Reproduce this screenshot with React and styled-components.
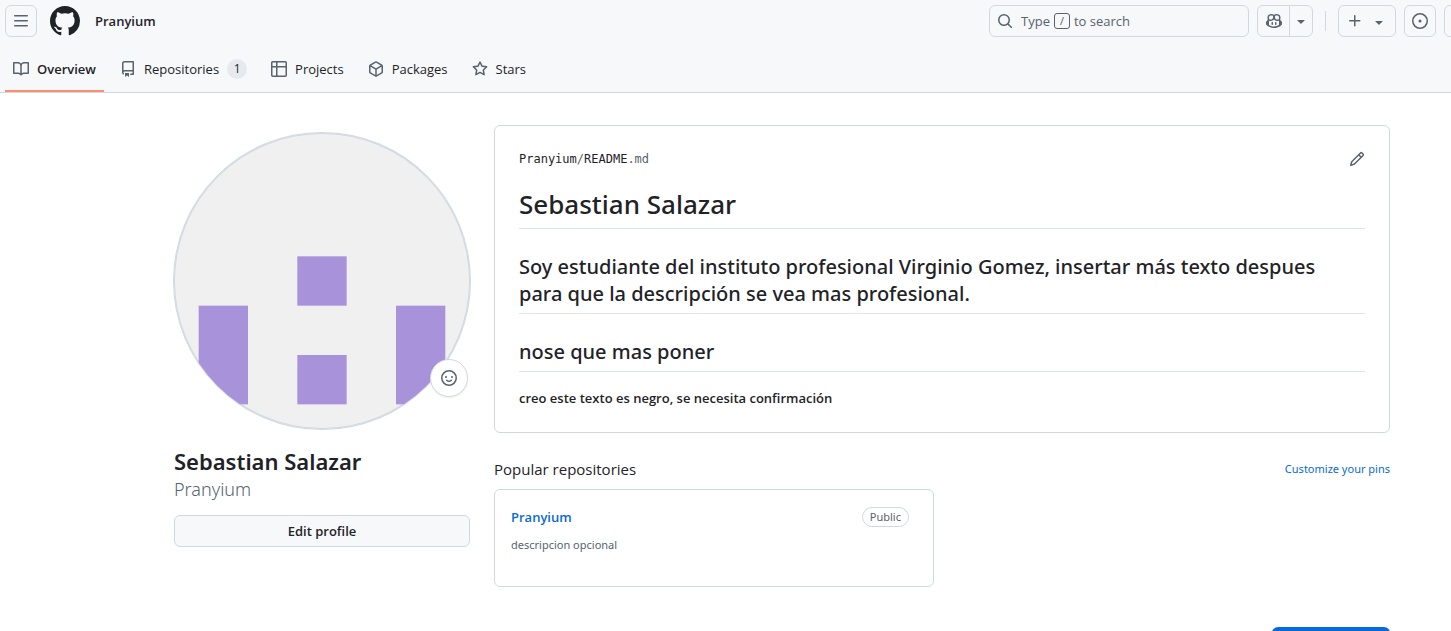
import React from "react";
import styled, { createGlobalStyle } from "styled-components";

const color = {
  text: "#1f2328",
  muted: "#59636e",
  border: "#d1d9e0",
  subtle: "#f6f8fa",
  accent: "#0969da",
};

const wideFont = '"Noto Sans", "Open Sans", sans-serif';

const GlobalStyle = createGlobalStyle`
  *, *::before, *::after { box-sizing: border-box; }
  body {
    margin: 0;
    background: #fff;
    color: ${color.text};
    font-family: "Open Sans", "Noto Sans", sans-serif;
    font-size: 13px;
    line-height: 20px;
  }
  h1, h2, h3, p, ul { margin: 0; padding: 0; }
  button { font: inherit; color: inherit; cursor: pointer; }
  a { text-decoration: none; color: inherit; }
`;

const paths = {
  menu: "M1 2.75A.75.75 0 0 1 1.75 2h12.5a.75.75 0 0 1 0 1.5H1.75A.75.75 0 0 1 1 2.75Zm0 5A.75.75 0 0 1 1.75 7h12.5a.75.75 0 0 1 0 1.5H1.75A.75.75 0 0 1 1 7.75ZM1.75 12h12.5a.75.75 0 0 1 0 1.5H1.75a.75.75 0 0 1 0-1.5Z",
  github:
    "M8 0C3.58 0 0 3.58 0 8c0 3.54 2.29 6.53 5.47 7.59.4.07.55-.17.55-.38 0-.19-.01-.82-.01-1.49-2.01.37-2.53-.49-2.69-.94-.09-.23-.48-.94-.82-1.13-.28-.15-.68-.52-.01-.53.63-.01 1.08.58 1.23.82.72 1.21 1.87.87 2.33.66.07-.52.28-.87.51-1.07-1.78-.2-3.64-.89-3.64-3.95 0-.87.31-1.59.82-2.15-.08-.2-.36-1.02.08-2.12 0 0 .67-.21 2.2.82.64-.18 1.32-.27 2-.27.68 0 1.36.09 2 .27 1.53-1.04 2.2-.82 2.2-.82.44 1.1.16 1.92.08 2.12.51.56.82 1.27.82 2.15 0 3.07-1.87 3.75-3.65 3.95.29.25.54.73.54 1.48 0 1.07-.01 1.93-.01 2.2 0 .21.15.46.55.38A8.013 8.013 0 0 0 16 8c0-4.42-3.58-8-8-8Z",
  book: "M0 1.75A.75.75 0 0 1 .75 1h4.253c1.227 0 2.317.59 3 1.501A3.743 3.743 0 0 1 11.006 1h4.245a.75.75 0 0 1 .75.75v10.5a.75.75 0 0 1-.75.75h-4.507a2.25 2.25 0 0 0-1.591.659l-.622.621a.75.75 0 0 1-1.06 0l-.622-.621A2.25 2.25 0 0 0 5.258 13H.75a.75.75 0 0 1-.75-.75Zm7.251 10.324.004-5.073-.002-2.253A2.25 2.25 0 0 0 5.003 2.5H1.5v9h3.757a3.75 3.75 0 0 1 1.994.574ZM8.755 4.75l-.004 7.322a3.752 3.752 0 0 1 1.992-.572H14.5v-9h-3.495a2.25 2.25 0 0 0-2.25 2.25Z",
  repo: "M2 2.5A2.5 2.5 0 0 1 4.5 0h8.75a.75.75 0 0 1 .75.75v12.5a.75.75 0 0 1-.75.75h-2.5a.75.75 0 0 1 0-1.5h1.75v-2h-8a1 1 0 0 0-.714 1.7.75.75 0 1 1-1.072 1.05A2.495 2.495 0 0 1 2 11.5Zm10.5-1h-8a1 1 0 0 0-1 1v6.708A2.486 2.486 0 0 1 4.5 9h8ZM5 12.25a.25.25 0 0 1 .25-.25h3.5a.25.25 0 0 1 .25.25v3.25a.25.25 0 0 1-.4.2l-1.45-1.087a.249.249 0 0 0-.3 0L5.4 15.7a.25.25 0 0 1-.4-.2Z",
  table:
    "M0 1.75C0 .784.784 0 1.75 0h12.5C15.216 0 16 .784 16 1.75v12.5A1.75 1.75 0 0 1 14.25 16H1.75A1.75 1.75 0 0 1 0 14.25ZM6.5 6.5v8h7.75a.25.25 0 0 0 .25-.25V6.5Zm8-1.5V1.75a.25.25 0 0 0-.25-.25H6.5V5Zm-13 1.5v7.75c0 .138.112.25.25.25H5v-8ZM5 5V1.5H1.75a.25.25 0 0 0-.25.25V5Z",
  package:
    "m8.878.392 5.25 3.045c.54.314.872.89.872 1.514v6.098a1.75 1.75 0 0 1-.872 1.514l-5.25 3.045a1.75 1.75 0 0 1-1.756 0l-5.25-3.045A1.75 1.75 0 0 1 1 11.049V4.951c0-.624.332-1.201.872-1.514L7.122.392a1.75 1.75 0 0 1 1.756 0ZM7.875 1.69l-4.63 2.685L8 7.133l4.755-2.758-4.63-2.685a.248.248 0 0 0-.25 0ZM2.5 5.677v5.372c0 .09.047.171.125.216l4.625 2.683V8.432Zm6.25 8.271 4.625-2.683a.25.25 0 0 0 .125-.216V5.677L8.75 8.432Z",
  star: "M8 .25a.75.75 0 0 1 .673.418l1.882 3.815 4.21.612a.75.75 0 0 1 .416 1.279l-3.046 2.97.719 4.192a.751.751 0 0 1-1.088.791L8 12.347l-3.766 1.98a.75.75 0 0 1-1.088-.79l.72-4.194L.818 6.374a.75.75 0 0 1 .416-1.28l4.21-.611L7.327.668A.75.75 0 0 1 8 .25Zm0 2.445L6.615 5.5a.75.75 0 0 1-.564.41l-3.097.45 2.24 2.184a.75.75 0 0 1 .216.664l-.528 3.084 2.769-1.456a.75.75 0 0 1 .698 0l2.77 1.456-.53-3.084a.75.75 0 0 1 .216-.664l2.24-2.183-3.096-.45a.75.75 0 0 1-.564-.41L8 2.694Z",
  search:
    "M10.68 11.74a6 6 0 0 1-7.922-8.982 6 6 0 0 1 8.982 7.922l3.04 3.04a.749.749 0 0 1-.326 1.275.749.749 0 0 1-.734-.215ZM11.5 7a4.499 4.499 0 1 0-8.997 0A4.499 4.499 0 0 0 11.5 7Z",
  copilot:
    "M7.998 15.035c-4.562 0-7.873-2.914-7.998-3.749V9.338c.085-.628.677-1.686 1.588-2.065.013-.07.024-.143.036-.218.029-.183.06-.384.126-.612-.201-.508-.254-1.084-.254-1.656 0-.87.128-1.769.693-2.484.579-.733 1.494-1.124 2.724-1.261 1.206-.134 2.262.034 2.944.765.05.053.096.108.139.165.044-.057.094-.112.143-.165.682-.731 1.738-.899 2.944-.765 1.23.137 2.145.528 2.724 1.261.566.715.693 1.614.693 2.484 0 .572-.053 1.148-.254 1.656.066.228.098.429.126.612.012.076.024.148.037.218.924.385 1.522 1.471 1.591 2.095v1.872c0 .766-3.351 3.795-8.002 3.795Zm0-1.485c2.28 0 4.584-1.11 5.002-1.433V7.862l-.023-.116c-.49.21-1.075.291-1.727.291-1.146 0-2.059-.327-2.71-.991A3.222 3.222 0 0 1 8 6.303a3.24 3.24 0 0 1-.544.743c-.65.664-1.563.991-2.71.991-.652 0-1.236-.081-1.727-.291l-.023.116v4.255c.419.323 2.722 1.433 5.002 1.433ZM6.762 2.83c-.193-.206-.637-.413-1.682-.297-1.019.113-1.479.404-1.713.7-.247.312-.369.789-.369 1.554 0 .793.129 1.171.308 1.371.162.181.519.379 1.442.379.853 0 1.339-.235 1.638-.54.315-.322.527-.827.617-1.553.117-.935-.037-1.395-.241-1.614Zm4.155-.297c-1.044-.116-1.488.091-1.681.297-.204.219-.359.679-.242 1.614.091.726.303 1.231.618 1.553.299.305.784.54 1.638.54.922 0 1.28-.198 1.442-.379.179-.2.308-.578.308-1.371 0-.765-.123-1.242-.37-1.554-.233-.296-.693-.587-1.713-.7ZM6.25 9.037a.75.75 0 0 1 .75.75v1.501a.75.75 0 0 1-1.5 0V9.787a.75.75 0 0 1 .75-.75Zm4.25.75v1.501a.75.75 0 0 1-1.5 0V9.787a.75.75 0 0 1 1.5 0Z",
  caret:
    "m4.427 7.427 3.396 3.396a.25.25 0 0 0 .354 0l3.396-3.396A.25.25 0 0 0 11.396 7H4.604a.25.25 0 0 0-.177.427Z",
  plus: "M7.75 2a.75.75 0 0 1 .75.75V7h4.25a.75.75 0 0 1 0 1.5H8.5v4.25a.75.75 0 0 1-1.5 0V8.5H2.75a.75.75 0 0 1 0-1.5H7V2.75A.75.75 0 0 1 7.75 2Z",
  issue:
    "M8 9.5a1.5 1.5 0 1 0 0-3 1.5 1.5 0 0 0 0 3ZM8 0a8 8 0 1 1 0 16A8 8 0 0 1 8 0ZM1.5 8a6.5 6.5 0 1 0 13 0 6.5 6.5 0 0 0-13 0Z",
  pull: "M1.5 3.25a2.25 2.25 0 1 1 3 2.122v5.256a2.251 2.251 0 1 1-1.5 0V5.372A2.25 2.25 0 0 1 1.5 3.25Z",
  pencil:
    "M11.013 1.427a1.75 1.75 0 0 1 2.474 0l1.086 1.086a1.75 1.75 0 0 1 0 2.474l-8.61 8.61c-.21.21-.47.364-.756.445l-3.251.93a.75.75 0 0 1-.927-.928l.929-3.25c.081-.286.235-.547.445-.758l8.61-8.61Zm.176 4.823L9.75 4.81l-6.286 6.287a.253.253 0 0 0-.064.108l-.558 1.953 1.953-.558a.253.253 0 0 0 .108-.064Zm1.238-3.763a.25.25 0 0 0-.354 0L10.811 3.75l1.439 1.44 1.263-1.263a.25.25 0 0 0 0-.354Z",
  smiley:
    "M8 0a8 8 0 1 1 0 16A8 8 0 0 1 8 0ZM1.5 8a6.5 6.5 0 1 0 13 0 6.5 6.5 0 0 0-13 0ZM5.32 9.636a.75.75 0 0 1 1.038.175c.103.118.227.231.357.319.264.178.683.37 1.285.37.602 0 1.02-.192 1.285-.371.13-.088.254-.2.357-.318a.75.75 0 0 1 1.222.87c-.2.27-.45.49-.73.67-.474.322-1.18.649-2.134.649-.946 0-1.652-.327-2.126-.649a3.3 3.3 0 0 1-.73-.67.75.75 0 0 1 .176-1.045ZM12 7a1 1 0 1 1-2 0 1 1 0 0 1 2 0ZM5 8a1 1 0 1 1 0-2 1 1 0 0 1 0 2Z",
};

function Icon({ name, size = 16 }) {
  return (
    <svg width={size} height={size} viewBox="0 0 16 16" fill="currentColor" aria-hidden="true">
      <path d={paths[name]} />
    </svg>
  );
}

const Page = styled.div`
  height: 100vh;
  overflow: hidden;
`;

const Header = styled.header`
  background: ${color.subtle};
  border-bottom: 1px solid ${color.border};
  padding: 5px 0 0 5px;
`;

const TopBar = styled.div`
  display: flex;
  align-items: center;
  overflow: hidden;

  svg { display: block; }
`;

const Brand = styled.a`
  margin-left: 13px;
`;

const Owner = styled.a`
  margin-left: 15px;
  font-weight: 600;
`;

const IconButton = styled.button`
  display: flex;
  flex: none;
  align-items: center;
  justify-content: center;
  width: 32px;
  height: 32px;
  padding: 0;
  color: ${color.muted};
  background: transparent;
  border: 1px solid ${color.border};
  border-radius: 6px;
`;

const Tools = styled.div`
  display: flex;
  align-items: center;
  gap: 8px;
  margin: 0 -25px 0 auto;
`;

const SearchButton = styled.button`
  display: flex;
  align-items: center;
  width: 260px;
  height: 32px;
  padding: 0 7px;
  color: ${color.muted};
  background: transparent;
  border: 1px solid ${color.border};
  border-radius: 6px;

  svg { margin-right: 8px; }
`;

const Key = styled.kbd`
  width: 16px;
  height: 16px;
  margin: 0 4px;
  border: 1px solid ${color.muted};
  border-radius: 3px;
  font: 11px/14px "Open Sans", sans-serif;
`;

const SplitButton = styled.div`
  display: flex;

  ${IconButton}:first-child {
    width: 33px;
    border-radius: 6px 0 0 6px;
  }
  ${IconButton}:last-child {
    width: 24px;
    margin-left: -1px;
    border-radius: 0 6px 6px 0;
  }
`;

const Divider = styled.span`
  width: 1px;
  height: 20px;
  margin: 0 4px;
  background: ${color.border};
`;

const CreateButton = styled(IconButton)`
  gap: 8px;
  width: 58px;

  svg:last-child { margin-top: 2px; }
`;

const Tabs = styled.nav`
  display: flex;
  gap: 8px;
  height: 55px;
`;

const Tab = styled.a`
  display: flex;
  align-items: center;
  gap: 8px;
  padding: 11px 8px 0;
  padding-bottom: ${(p) => (p.$active ? 0 : 2)}px;
  font-weight: ${(p) => (p.$active ? 600 : 400)};
  border-bottom: ${(p) => (p.$active ? "2px solid #fd8c73" : "none")};

  svg { color: ${color.muted}; }
`;

const Counter = styled.span`
  min-width: 20px;
  border-radius: 10px;
  background: #e6eaef;
  font-size: 12px;
  text-align: center;
`;

const Layout = styled.div`
  display: grid;
  grid-template-columns: 296px minmax(0, 1fr);
  gap: 24px;
  padding: 32px 61px 32px 174px;
`;

const Sidebar = styled.aside`
  padding-top: 8px;
`;

const AvatarFrame = styled.div`
  position: relative;
  height: 296px;
`;

const Avatar = styled.svg`
  display: block;
  width: 100%;
  height: 100%;
  border-radius: 50%;
  background: #f0f0f0;
  box-shadow: 0 0 0 1px ${color.border}, inset 0 0 0 1px ${color.border};
`;

const StatusButton = styled(IconButton)`
  position: absolute;
  right: 2px;
  bottom: 32px;
  width: 38px;
  height: 38px;
  background: #fff;
  border-radius: 50%;
  box-shadow: 0 1px 2px rgba(31, 35, 40, 0.08);
`;

const FullName = styled.h1`
  margin-top: 16px;
  font-family: ${wideFont};
  font-size: 22px;
  line-height: 32px;
  font-weight: 600;
`;

const Username = styled.p`
  margin-bottom: 14px;
  color: ${color.muted};
  font-family: ${wideFont};
  font-size: 18px;
  line-height: 24px;
  font-weight: 300;
`;

const EditButton = styled.button`
  width: 100%;
  height: 32px;
  padding: 0;
  background: ${color.subtle};
  border: 1px solid ${color.border};
  border-radius: 6px;
  font-weight: 600;
`;

const Card = styled.section`
  border: 1px solid ${color.border};
  border-radius: 6px;
`;

const Readme = styled(Card)`
  padding: 24px;
`;

const FileRow = styled.div`
  display: flex;
  align-items: center;
  justify-content: space-between;
  height: 18px;
  margin-bottom: 16px;
`;

const FilePath = styled.span`
  font: 12px/18px "DejaVu Sans Mono", "Liberation Mono", monospace;

  span { color: ${color.muted}; }
`;

const EditLink = styled.a`
  display: flex;
  color: ${color.muted};
`;

const Title = styled.h2`
  padding-bottom: 4px;
  border-bottom: 1px solid #dfe4e9;
  font-family: ${wideFont};
  font-size: 26px;
  line-height: 40px;
  font-weight: 500;
`;

const Subtitle = styled.h3`
  margin-top: 24px;
  padding: 0 8px 6px 0;
  border-bottom: 1px solid #dfe4e9;
  font-family: ${wideFont};
  font-size: 20px;
  line-height: 27px;
  font-weight: 500;
`;

const Note = styled.p`
  margin-top: 16px;
  font-weight: 600;
`;

const SectionHead = styled.div`
  display: flex;
  align-items: center;
  justify-content: space-between;
  margin: 24px 0 8px;
`;

const SectionTitle = styled.h2`
  font-size: 15px;
  line-height: 24px;
  font-weight: 400;
`;

const PinsLink = styled.a`
  color: ${color.accent};
  font-family: ${wideFont};
  font-size: 11px;
`;

const RepoGrid = styled.div`
  display: grid;
  grid-template-columns: 1fr 1fr;
  gap: 16px;
`;

const RepoCard = styled(Card)`
  min-height: 98px;
  padding: 16px;
`;

const RepoHead = styled.div`
  display: flex;
  align-items: center;
  justify-content: space-between;
  height: 22px;
  padding-right: 8px;
`;

const RepoLink = styled.a`
  color: ${color.accent};
  font-weight: 600;
`;

const Badge = styled.span`
  padding: 0 7px;
  color: ${color.muted};
  border: 1px solid ${color.border};
  border-radius: 10px;
  font-family: ${wideFont};
  font-size: 11px;
  line-height: 18px;
`;

const Description = styled.p`
  margin-top: 8px;
  color: ${color.muted};
  font-family: ${wideFont};
  font-size: 11px;
  line-height: 18px;
`;

const Footer = styled.div`
  display: flex;
  justify-content: flex-end;
  margin-top: 40px;
`;

const PrimaryButton = styled.button`
  width: 118px;
  height: 32px;
  background: ${color.accent};
  border: 0;
  border-radius: 6px;
`;

const tabs = [
  { label: "Overview", icon: "book", active: true },
  { label: "Repositories", icon: "repo", count: 1 },
  { label: "Projects", icon: "table" },
  { label: "Packages", icon: "package" },
  { label: "Stars", icon: "star" },
];

const cells = [
  [175, 175, 70],
  [175, 315, 70],
  [35, 245, 140],
  [315, 245, 140],
];

export default function App() {
  return (
    <Page>
      <GlobalStyle />
      <Header>
        <TopBar>
          <IconButton aria-label="Open menu"><Icon name="menu" /></IconButton>
          <Brand href="#" aria-label="GitHub"><Icon name="github" size={30} /></Brand>
          <Owner href="#">Pranyium</Owner>
          <Tools>
            <SearchButton>
              <Icon name="search" />
              Type<Key>/</Key>to search
            </SearchButton>
            <SplitButton>
              <IconButton aria-label="Copilot"><Icon name="copilot" /></IconButton>
              <IconButton aria-label="Copilot options"><Icon name="caret" /></IconButton>
            </SplitButton>
            <Divider />
            <CreateButton aria-label="Create new">
              <Icon name="plus" />
              <Icon name="caret" />
            </CreateButton>
            <IconButton aria-label="Issues"><Icon name="issue" /></IconButton>
            <IconButton aria-label="Pull requests"><Icon name="pull" /></IconButton>
          </Tools>
        </TopBar>
        <Tabs aria-label="Profile">
          {tabs.map((t) => (
            <Tab key={t.label} href="#" $active={t.active}>
              <Icon name={t.icon} />
              {t.label}
              {t.count && <Counter>{t.count}</Counter>}
            </Tab>
          ))}
        </Tabs>
      </Header>

      <Layout>
        <Sidebar>
          <AvatarFrame>
            <Avatar viewBox="0 0 420 420" role="img" aria-label="Avatar">
              {cells.map(([x, y, h]) => (
                <rect key={`${x}-${y}`} x={x} y={y} width="70" height={h} fill="#a893da" />
              ))}
            </Avatar>
            <StatusButton aria-label="Set status"><Icon name="smiley" /></StatusButton>
          </AvatarFrame>
          <FullName>Sebastian Salazar</FullName>
          <Username>Pranyium</Username>
          <EditButton>Edit profile</EditButton>
        </Sidebar>

        <main>
          <Readme>
            <FileRow>
              <FilePath>Pranyium<span>/</span>README<span>.md</span></FilePath>
              <EditLink href="#" aria-label="Edit README"><Icon name="pencil" /></EditLink>
            </FileRow>
            <Title>Sebastian Salazar</Title>
            <Subtitle>
              Soy estudiante del instituto profesional Virginio Gomez, insertar más texto despues
              para que la descripción se vea mas profesional.
            </Subtitle>
            <Subtitle>nose que mas poner</Subtitle>
            <Note>creo este texto es negro, se necesita confirmación</Note>
          </Readme>

          <SectionHead>
            <SectionTitle>Popular repositories</SectionTitle>
            <PinsLink href="#">Customize your pins</PinsLink>
          </SectionHead>
          <RepoGrid>
            <RepoCard>
              <RepoHead>
                <RepoLink href="#">Pranyium</RepoLink>
                <Badge>Public</Badge>
              </RepoHead>
              <Description>descripcion opcional</Description>
            </RepoCard>
          </RepoGrid>
          <Footer>
            <PrimaryButton aria-label="Send feedback" />
          </Footer>
        </main>
      </Layout>
    </Page>
  );
}
